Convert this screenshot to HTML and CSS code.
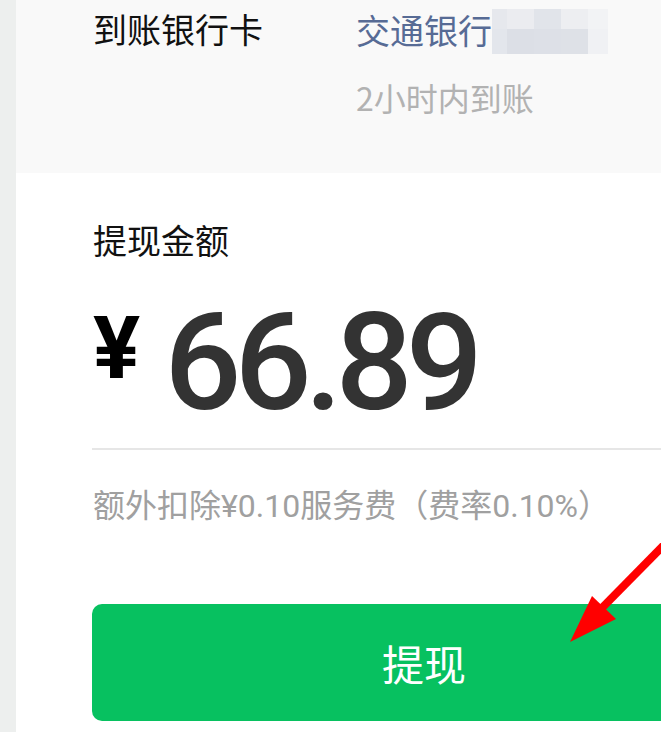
FILE: index.html
```html
<!DOCTYPE html>
<html lang="zh-CN">
<head>
  <meta charset="UTF-8">
  <meta name="viewport" content="width=device-width, initial-scale=1.0">
  <title>提现</title>
  <link rel="stylesheet" href="styles.css">
</head>
<body>

  <div class="page">
    <div class="side"></div>

    <div class="main">
      <div class="bank-section">
        <div class="row">
          <div class="label">到账银行卡</div>
          <div class="value">
            <span class="bank-name">交通银行</span>
            <span class="mosaic">
              <i style="background:#e6e8ed"></i><i style="background:#ebecf0"></i><i style="background:#e1e4ea"></i><i style="background:#edeef1"></i><i style="background:#f2f3f5"></i>
              <i style="background:#e3e6ec"></i><i style="background:#dcdfe6"></i><i style="background:#dde0e7"></i><i style="background:#dee1e7"></i><i style="background:#f0f1f4"></i>
            </span>
          </div>
        </div>
        <div class="row">
          <div class="label"></div>
          <div class="value hint">2小时内到账</div>
        </div>
      </div>

      <div class="amount-section">
        <div class="amount-label">提现金额</div>
        <div class="amount">
          <span class="currency">¥</span>
          <span class="number">66.89</span>
        </div>
        <div class="fee">额外扣除¥0.10服务费（费率0.10%）</div>
        <button class="withdraw-btn">提现</button>
      </div>
    </div>
  </div>

  <!-- annotation arrow -->
  <svg class="arrow" width="661" height="732" viewBox="0 0 661 732">
    <line x1="720" y1="488" x2="596" y2="614" stroke="#ff0000" stroke-width="8"/>
    <polygon points="570,642 592,596 616,619" fill="#ff0000"/>
  </svg>

</body>
</html>
```

FILE: styles.css
```css
* {
  box-sizing: border-box;
  margin: 0;
  padding: 0;
}

body {
  font-family: 'Noto Sans CJK SC', 'Noto Sans', sans-serif;
  background: #fff;
  overflow: hidden;
  height: 732px;
  position: relative;
}

.page {
  display: flex;
  min-height: 732px;
}

.side {
  width: 16px;
  flex-shrink: 0;
  background: #edefee;
}

.main {
  width: 816px;
  flex-shrink: 0;
  background: #fff;
}

.bank-section {
  background: #f9f9f9;
  padding: 5px 76px 52px 77px;
}

.row {
  display: grid;
  grid-template-columns: 263px 1fr;
  font-size: 34px;
  line-height: 48px;
}

.row + .row {
  margin-top: 19px;
}

.label {
  color: #111;
}

.value {
  display: flex;
  align-items: center;
}

.bank-name {
  color: #576b95;
}

.mosaic {
  display: grid;
  grid-template-columns: 15px 27px 27px 27px 20px;
  grid-template-rows: 20px 25px;
  margin-top: 4px;
}

.mosaic i {
  display: block;
}

.hint {
  color: #b2b2b2;
  font-size: 32px;
}

.amount-section {
  padding: 43px 76px 0 76px;
}

.amount-label {
  font-size: 34px;
  line-height: 48px;
  color: #111;
  padding-left: 1px;
}

.amount {
  display: flex;
  align-items: flex-start;
  margin-top: 31px;
  padding-bottom: 17px;
  border-bottom: 2px solid #e6e6e6;
}

.currency {
  font-family: Roboto, 'Liberation Sans', sans-serif;
  font-weight: 700;
  font-size: 88px;
  line-height: 1;
  color: #000;
  margin-top: 9px;
  margin-left: 1px;
  margin-right: 24px;
}

.number {
  font-family: Roboto, 'Liberation Sans', sans-serif;
  font-weight: 500;
  font-size: 136px;
  line-height: 136px;
  letter-spacing: -7px;
  color: #333;
}

.fee {
  margin-top: 34px;
  font-family: Roboto, 'Noto Sans CJK SC', sans-serif;
  font-size: 32px;
  line-height: 44px;
  color: #a0a0a0;
  padding-left: 1px;
}

.withdraw-btn {
  display: block;
  width: 100%;
  height: 117px;
  margin-top: 76px;
  border: none;
  border-radius: 10px;
  background: #07c160;
  color: #fff;
  font-family: 'Noto Sans CJK SC', sans-serif;
  font-size: 42px;
  cursor: pointer;
}

.arrow {
  position: absolute;
  left: 0;
  top: 0;
  pointer-events: none;
}
```
